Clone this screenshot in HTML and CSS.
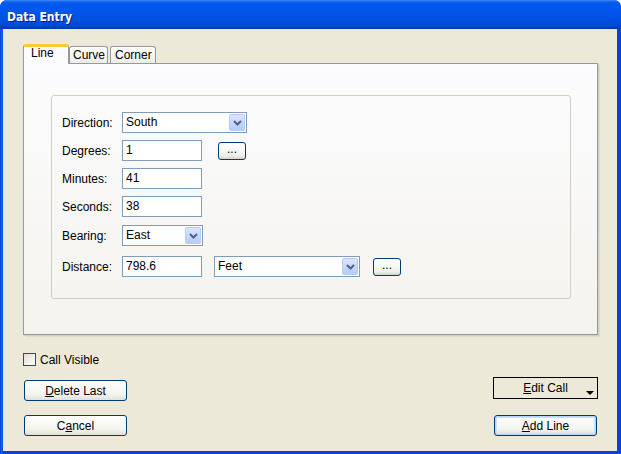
FILE: index.html
```html
<!DOCTYPE html>
<html>
<head>
<meta charset="utf-8">
<link rel="stylesheet" href="styles.css">
</head>
<body>
<div class="window">
  <div class="titlebar"><span class="title">Data Entry</span></div>
  <div class="client">
    <div class="tabs">
      <div class="tab active">Line</div>
      <div class="tab">Curve</div>
      <div class="tab">Corner</div>
    </div>
    <div class="panel">
      <div class="group">
        <div class="row">
          <span class="lbl">Direction:</span>
          <div class="select w124"><span>South</span><i class="drop"><svg width="9" height="6" viewBox="0 0 9 6"><path d="M1 1l3.5 3.5L8 1" fill="none" stroke="#4D6185" stroke-width="2"/></svg></i></div>
        </div>
        <div class="row">
          <span class="lbl">Degrees:</span>
          <div class="input">1</div>
          <button class="dots d1">...</button>
        </div>
        <div class="row">
          <span class="lbl">Minutes:</span>
          <div class="input">41</div>
        </div>
        <div class="row">
          <span class="lbl">Seconds:</span>
          <div class="input">38</div>
        </div>
        <div class="row r5">
          <span class="lbl">Bearing:</span>
          <div class="select w80"><span>East</span><i class="drop"><svg width="9" height="6" viewBox="0 0 9 6"><path d="M1 1l3.5 3.5L8 1" fill="none" stroke="#4D6185" stroke-width="2"/></svg></i></div>
        </div>
        <div class="row r6">
          <span class="lbl">Distance:</span>
          <div class="input">798.6</div>
          <div class="select w145 feet"><span>Feet</span><i class="drop"><svg width="9" height="6" viewBox="0 0 9 6"><path d="M1 1l3.5 3.5L8 1" fill="none" stroke="#4D6185" stroke-width="2"/></svg></i></div>
          <button class="dots d2">...</button>
        </div>
      </div>
    </div>
    <div class="bottom">
      <div class="leftcol">
        <label class="check"><span class="box"></span>Call Visible</label>
        <button class="btn del"><u>D</u>elete Last</button>
        <button class="btn cancel">C<u>a</u>ncel</button>
      </div>
      <div class="rightcol">
        <button class="btn edit"><u>E</u>dit Call<i class="tri"></i></button>
        <button class="btn add default"><u>A</u>dd Line</button>
      </div>
    </div>
  </div>
</div>
</body>
</html>
```

FILE: styles.css
```css
* { box-sizing: border-box; }
html, body { margin: 0; padding: 0; background: #ffffff; }
body { width: 621px; height: 454px; overflow: hidden; font-family: "Liberation Sans", Arial, sans-serif; font-size: 12px; color: #000; }

.window { width: 621px; height: 454px; display: flex; flex-direction: column; background: linear-gradient(to right, #0841D8, #1E63F2 2px, #0842D6 3px); border-radius: 7px 7px 0 0; overflow: hidden; }

.titlebar {
  height: 29px; flex: none;
  background: linear-gradient(to bottom, #3D8CF6 0px, #0A5FEF 2px, #0058EE 4px, #0155EB 12px, #0050E2 20px, #004AD8 25px, #0041C6 27px, #0036B0 29px);
  display: flex; align-items: center; padding-left: 7px; padding-top: 4px;
}
.title { color: #fff; font-family: "DejaVu Sans Condensed", "DejaVu Sans", sans-serif; font-weight: bold; font-size: 12px; text-shadow: 1px 1px 0 #0A1E7A; }

.client {
  flex: 1; margin: 0 4px 3px 3px; background: #ECE9D8;
  padding: 15px 20px 0 20px; display: flex; flex-direction: column;
}

.tabs { display: flex; height: 19px; align-items: flex-end; position: relative; z-index: 1; }
.tab {
  height: 17px; padding: 0 4px; margin-right: 2px;
  border: 1px solid #919B9C; border-bottom: 0; border-radius: 3px 3px 0 0;
  background: linear-gradient(to bottom, #FFFFFF, #ECEBE6);
  font-size: 12px; line-height: 16px; color: #000;
}
.tab:nth-child(2) { width: 39px; padding-left: 3px; }
.tab:nth-child(3) { width: 46px; }
.tab.active {
  height: 20px; width: 46px; margin-bottom: -1px; padding-left: 7px;
  background: #FCFCFE; border-top: 3px solid #FFC83C; border-radius: 3px 3px 0 0;
  line-height: 13px; margin-right: 0;
}

.panel {
  width: 575px; height: 272px;
  border: 1px solid #919B9C;
  box-shadow: 1px 1px 0 #D0CEBF, 2px 2px 0 #DEDBCB;
  background: linear-gradient(to bottom, #FCFCFE 0%, #F4F3EE 100%);
  padding: 31px 0 0 27px;
}

.group {
  width: 520px; height: 204px;
  border: 1px solid #D0D0BF; border-radius: 3px;
  padding: 16px 0 0 10px;
  display: flex; flex-direction: column; gap: 7px;
}
.row { display: flex; align-items: center; height: 21px; }
.row.r5 { margin-top: 1px; }
.row.r6 { margin-top: 3px; }
.lbl { width: 60px; flex: none; }

.input {
  width: 80px; height: 21px; border: 1px solid #7F9DB9; background: #fff;
  padding: 0 0 0 3px; line-height: 19px;
}

.select {
  height: 21px; border: 1px solid #7F9DB9; background: #fff;
  display: flex; align-items: center; justify-content: space-between;
  padding: 0 1px 0 3px;
}
.select span { line-height: 19px; }
.w124 { width: 125px; }
.w80 { width: 81px; }
.w145 { width: 146px; }
.feet { margin-left: 12px; }
.drop {
  width: 16px; height: 17px; border-radius: 2px;
  background: linear-gradient(to bottom, #DAE5FE, #B7CBF8);
  border: 1px solid #B9CBF3;
  display: flex; align-items: center; justify-content: center;
}

.dots {
  width: 28px; height: 18px; padding: 0 0 4px 0;
  border: 1px solid #003C74; border-radius: 3px;
  background: linear-gradient(to bottom, #FFFFFF, #F0F0EA 80%, #D6D0C5);
  font-family: "Liberation Sans", Arial, sans-serif; font-size: 12px; color: #000; line-height: 10px;
}
.d1 { margin-left: 16px; }
.d2 { margin-left: 13px; }

.bottom { display: flex; justify-content: space-between; padding-top: 18px; }
.leftcol { display: flex; flex-direction: column; align-items: flex-start; }
.rightcol { display: flex; flex-direction: column; align-items: flex-end; padding-top: 24px; margin-right: -1px; }

.check { display: flex; align-items: center; height: 13px; }
.box {
  width: 13px; height: 13px; border: 1px solid #1C5180;
  background: linear-gradient(135deg, #DCDCD7, #FFFFFF);
  margin-right: 4px;
}

.btn {
  font-family: "Liberation Sans", Arial, sans-serif; font-size: 12px; color: #000;
  width: 103px; height: 21px; border: 1px solid #003C74; border-radius: 3px;
  background: linear-gradient(to bottom, #FFFFFF, #F3F3EF 70%, #E2DFD5);
  padding: 0; line-height: 18px;
}
.del { margin-top: 14px; margin-left: 1px; }
.cancel { margin-top: 14px; margin-left: 1px; }

.edit {
  width: 105px; height: 22px; border-radius: 0; border: 1px solid #000;
  background: #ECE9D8; position: relative; line-height: 18px;
}
.tri {
  position: absolute; right: 3px; bottom: 3px; width: 0; height: 0;
  border-left: 4px solid transparent; border-right: 4px solid transparent; border-top: 4px solid #000;
}
.add { margin-top: 16px; margin-right: 1px; }
.default { box-shadow: inset 0 0 0 1px #B8D2F9, inset 0 0 0 2px #CDE0FC; }
```
